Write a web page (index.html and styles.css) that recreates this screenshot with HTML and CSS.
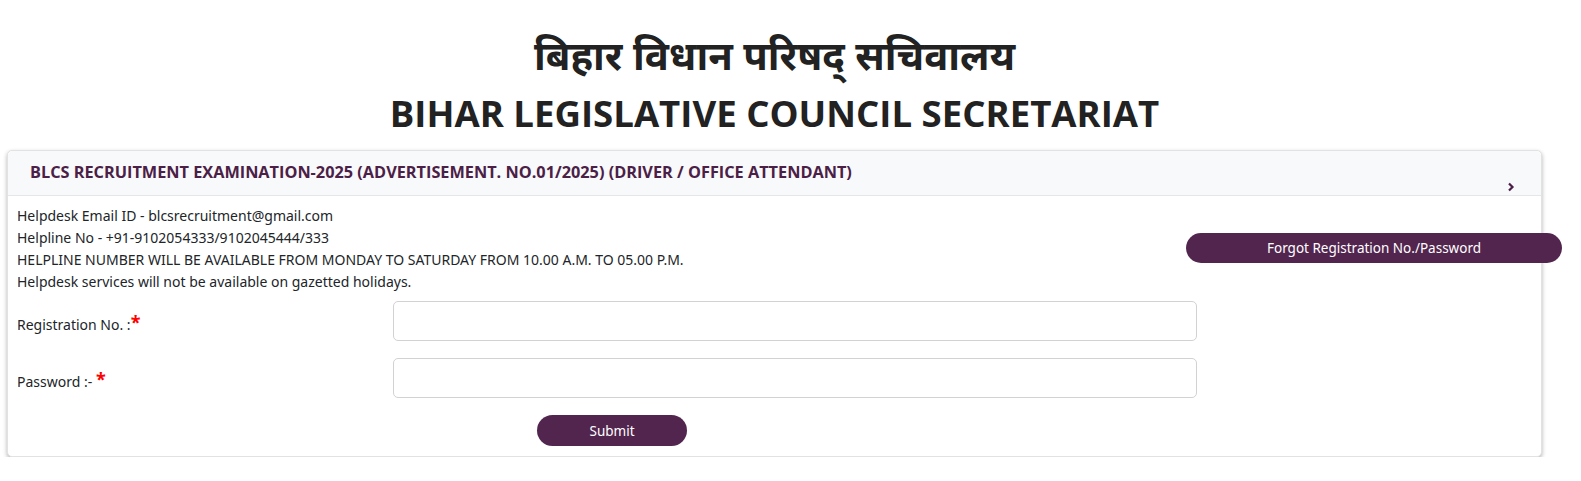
FILE: index.html
```html
<!DOCTYPE html>
<html lang="en">
<head>
<meta charset="utf-8">
<title>BLCS Recruitment</title>
<link rel="stylesheet" href="styles.css">
</head>
<body>
<header class="titles">
  <h1 class="title-hi">बिहार विधान परिषद् सचिवालय</h1>
  <h2 class="title-en">BIHAR LEGISLATIVE COUNCIL SECRETARIAT</h2>
</header>
<section class="card">
  <div class="card-header">
    <span class="card-title">BLCS RECRUITMENT EXAMINATION-2025 (ADVERTISEMENT. NO.01/2025) (DRIVER / OFFICE ATTENDANT)</span>
    <svg class="chev" width="8" height="10" viewBox="0 0 8 10"><path d="M2 1.5 L5.5 5 L2 8.5" fill="none" stroke="#4a1f48" stroke-width="2.2"/></svg>
  </div>
  <div class="card-body">
    <div class="info-row">
      <div class="info">
        <p>Helpdesk Email ID - blcsrecruitment@gmail.com</p>
        <p>Helpline No - +91-9102054333/9102045444/333</p>
        <p>HELPLINE NUMBER WILL BE AVAILABLE FROM MONDAY TO SATURDAY FROM 10.00 A.M. TO 05.00 P.M.</p>
        <p>Helpdesk services will not be available on gazetted holidays.</p>
      </div>
      <button class="btn btn-forgot" type="button">Forgot Registration No./Password</button>
    </div>
    <form class="form">
      <label class="lbl" for="reg">Registration No. :<span class="req">*</span></label>
      <input class="inp" id="reg" type="text">
      <label class="lbl" for="pwd">Password :- <span class="req">*</span></label>
      <input class="inp" id="pwd" type="password">
      <div class="submit-row">
        <button class="btn btn-submit" type="button">Submit</button>
      </div>
    </form>
  </div>
</section>
</body>
</html>
```
FILE: styles.css
```css
* { box-sizing: border-box; }
body {
  margin: 0;
  background: #fff;
  color: #212529;
  font-family: "Noto Sans", "Open Sans", sans-serif;
  font-size: 14px;
}
.titles {
  text-align: center;
  padding-top: 27px;
  height: 150px;
  margin: 0 39px 0 7px;
}
.title-hi {
  margin: 0;
  font-family: "Noto Sans", "Noto Sans Devanagari", "Lohit Devanagari", sans-serif;
  font-weight: 700;
  font-size: 40px;
  line-height: 56px;
  color: #222;
}
.title-en {
  margin: 0;
  font-family: "Open Sans", "Noto Sans", sans-serif;
  font-weight: 700;
  font-size: 36.6px;
  line-height: 60px;
  color: #222;
}
.card {
  margin: 0 39px 0 7px;
  border: 1px solid #e2e2e2;
  border-radius: 5px;
  box-shadow: 0 2px 4px rgba(0,0,0,0.3);
  background: #fff;
}
.card-header {
  height: 45px;
  background: #f8f9fb;
  border-bottom: 1px solid #e4e6ea;
  border-radius: 5px 5px 0 0;
  display: flex;
  padding: 0 26px 0 22px;
}
.card-title {
  flex: 1;
  align-self: center;
  font-family: "Open Sans", "Noto Sans", sans-serif;
  font-weight: 700;
  font-size: 16.3px;
  color: #4b2046;
  margin-top: -2px;
}
.chev {
  align-self: flex-end;
  margin-bottom: 3px;
}
.card-body {
  padding: 9px 9px 10px 9px;
}
.info-row {
  display: flex;
  justify-content: space-between;
  align-items: flex-start;
}
.info p {
  margin: 0;
  line-height: 22px;
}
.btn {
  border: none;
  border-radius: 16px;
  background: #52254f;
  color: #fff;
  font-family: "Noto Sans", sans-serif;
  font-size: 13.5px;
  cursor: pointer;
}
.btn-forgot {
  width: 376px;
  height: 30px;
  margin-top: 28px;
  margin-right: -30px;
}
.form {
  display: grid;
  grid-template-columns: 376px 804px;
  row-gap: 17px;
  align-items: center;
  margin-top: 8px;
}
.lbl {
  padding-top: 7px;
}
.req {
  color: #f00;
  font-size: 18px;
  vertical-align: top;
  line-height: 14px;
  font-weight: 700;
}
.inp {
  height: 40px;
  border: 1px solid #d2d2d2;
  border-radius: 5px;
  font-size: 14px;
  padding: 0 12px;
}
.submit-row {
  grid-column: 1 / -1;
  padding-left: 520px;
}
.btn-submit {
  width: 150px;
  height: 31px;
}
```
